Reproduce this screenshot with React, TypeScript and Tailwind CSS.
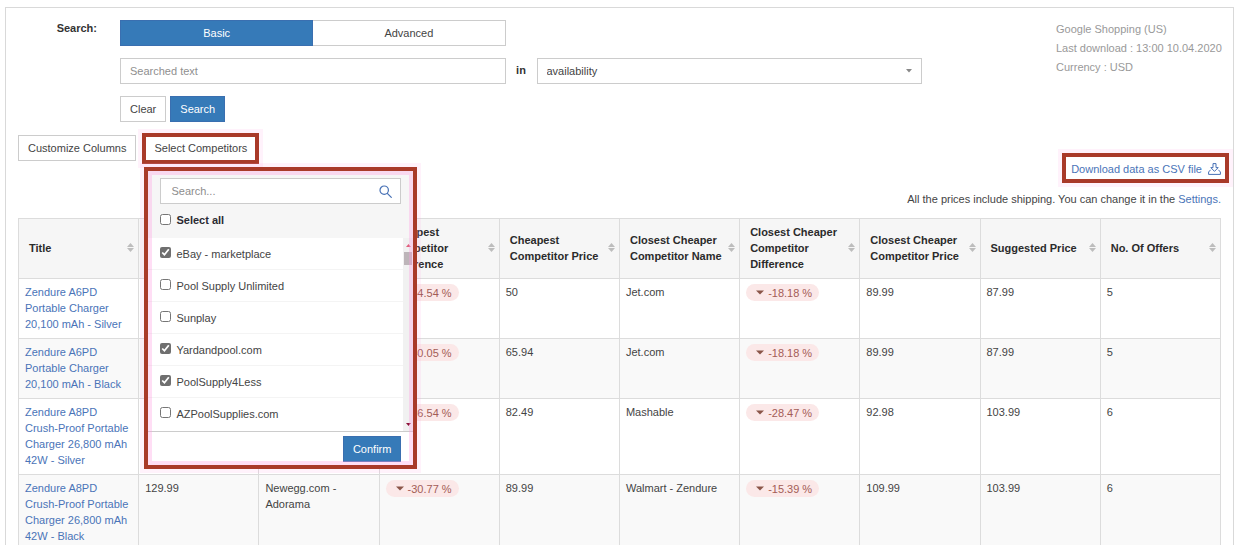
import { useState } from "react";

const LINK = "text-[#4a74b8]";

const columns = [
  "Title",
  "Price",
  "Cheapest Competitor Name",
  "Cheapest Competitor Difference",
  "Cheapest Competitor Price",
  "Closest Cheaper Competitor Name",
  "Closest Cheaper Competitor Difference",
  "Closest Cheaper Competitor Price",
  "Suggested Price",
  "No. Of Offers",
];

const rows = [
  { title: "Zendure A6PD Portable Charger 20,100 mAh - Silver", price: "", name: "", diff: "-54.54 %", low: "50", closest: "Jet.com", closestDiff: "-18.18 %", closestPrice: "89.99", suggested: "87.99", offers: 5 },
  { title: "Zendure A6PD Portable Charger 20,100 mAh - Black", price: "", name: "", diff: "-40.05 %", low: "65.94", closest: "Jet.com", closestDiff: "-18.18 %", closestPrice: "89.99", suggested: "87.99", offers: 5 },
  { title: "Zendure A8PD Crush-Proof Portable Charger 26,800 mAh 42W - Silver", price: "", name: "", diff: "-36.54 %", low: "82.49", closest: "Mashable", closestDiff: "-28.47 %", closestPrice: "92.98", suggested: "103.99", offers: 6 },
  { title: "Zendure A8PD Crush-Proof Portable Charger 26,800 mAh 42W - Black", price: "129.99", name: "Newegg.com - Adorama", diff: "-30.77 %", low: "89.99", closest: "Walmart - Zendure", closestDiff: "-15.39 %", closestPrice: "109.99", suggested: "103.99", offers: 6 },
];

const initialCompetitors = [
  { name: "eBay - marketplace", checked: true },
  { name: "Pool Supply Unlimited", checked: false },
  { name: "Sunplay", checked: false },
  { name: "Yardandpool.com", checked: true },
  { name: "PoolSupply4Less", checked: true },
  { name: "AZPoolSupplies.com", checked: false },
];

function SortIcon() {
  return (
    <svg width="7" height="9" viewBox="0 0 7 9" className="shrink-0 fill-[#bdbdbd]" aria-hidden="true">
      <path d="M3.5 0 7 4H0zM3.5 9 0 5h7z" />
    </svg>
  );
}

function Badge({ value }: { value: string }) {
  return (
    <span className="flex h-[17px] w-fit items-center gap-1 rounded-full bg-[#fbe8e8] pr-[7px] pl-[10px] text-[#a35c56]">
      <svg width="8" height="5" viewBox="0 0 8 5" className="fill-[#8a5548]" aria-hidden="true">
        <path d="M0 .5h8L4 4.5z" />
      </svg>
      {value}
    </span>
  );
}

function CompetitorPanel() {
  const [items, setItems] = useState(initialCompetitors);
  const all = items.every((i) => i.checked);
  return (
    <div className="absolute top-full left-0 z-10 mt-[3px] ml-[2px] w-[273px] border-4 border-[#a93a29] bg-white shadow-[0_0_0_4px_#ff9be022]">
      <div className="bg-[#f6f6f6] px-3 pt-[7px] pb-[10px]">
        <div className="flex h-[26px] items-center border border-[#ccc] bg-white pr-2 pl-[10px]">
          <input
            type="text"
            aria-label="Search competitors"
            placeholder="Search..."
            className="min-w-0 flex-1 outline-none placeholder:text-[#8d8d8d]"
          />
          <svg width="13" height="13" viewBox="0 0 13 13" className="fill-none stroke-[#4670b5] stroke-[1.2]" aria-hidden="true">
            <circle cx="5.2" cy="5.2" r="4.2" />
            <path d="m8.3 8.3 4 4" strokeLinecap="round" />
          </svg>
        </div>
        <label className="mt-2 flex h-4 items-center gap-[5px] font-bold text-[#2b2b33]">
          <input
            type="checkbox"
            checked={all}
            onChange={() => setItems(items.map((i) => ({ ...i, checked: !all })))}
            className="mb-[2px] size-[11px] accent-[#6f6f6f]"
          />
          Select all
        </label>
      </div>
      <div className="flex border-b border-[#ccc]">
        <ul className="flex-1 pb-[2px]">
          {items.map((item) => (
            <li key={item.name} className="border-b border-[#f4f4f4] last:border-0">
              <label className="flex h-[31px] items-center gap-[5px] px-3">
                <input
                  type="checkbox"
                  checked={item.checked}
                  onChange={() =>
                    setItems(items.map((i) => (i.name === item.name ? { ...i, checked: !i.checked } : i)))
                  }
                  className="mb-[2px] size-[11px] accent-[#6f6f6f]"
                />
                {item.name}
              </label>
            </li>
          ))}
        </ul>
        <div className="flex w-[10px] flex-col items-center justify-between bg-[#f1f1f1] pt-[6px] pb-[5px]" aria-hidden="true">
          <div className="flex w-full flex-col items-center gap-[5px]">
            <svg width="5" height="3" viewBox="0 0 5 3" className="fill-[#e0607c]">
              <path d="M0 3h5L2.500 0z" />
            </svg>
            <div className="h-[13px] w-2 bg-[#bdb5b9]" />
          </div>
          <svg width="5" height="3" viewBox="0 0 5 3" className="fill-[#8c1238]">
            <path d="M0 0h5L2.500 3z" />
          </svg>
        </div>
      </div>
      <div className="flex justify-end pt-1 pr-3 pb-[3px]">
        <button type="button" className="h-[26px] border border-[#3a6fb0] bg-[#367ab8] px-[9px] text-white">
          Confirm
        </button>
      </div>
      <div className="pointer-events-none absolute inset-0 shadow-[inset_0_0_0_4px_#ff9be055]" />
    </div>
  );
}

export default function App() {
  return (
    <main className="min-h-screen bg-white pt-[7px] pr-[6px] pl-[5px] font-['Liberation_Sans',Arial,sans-serif] text-[11px] leading-4 text-[#444]">
      <div className="border border-[#d9d9d9] px-3">
        <form className="flex pt-3" onSubmit={(e) => e.preventDefault()}>
          <label htmlFor="query" className="w-[79px] shrink-0 text-right font-bold text-[#333]">
            Search:
          </label>
          <div className="ml-[23px] flex flex-1 flex-col gap-3">
            <div className="grid grid-cols-[1fr_31px_1fr]">
              <div className="flex h-[26px]">
                <button type="button" className="flex-1 border border-[#3a6fb0] bg-[#367ab8] text-white">
                  Basic
                </button>
                <button type="button" className="flex-1 border border-l-0 border-[#ccc] bg-white">
                  Advanced
                </button>
              </div>
            </div>
            <div className="grid grid-cols-[1fr_31px_1fr]">
              <input
                id="query"
                type="text"
                placeholder="Searched text"
                className="h-[26px] min-w-0 border border-[#ccc] px-[9px] outline-none placeholder:text-[#8f8f8f]"
              />
              <label htmlFor="field" className="pt-1 text-center font-bold text-[#333]">
                in
              </label>
              <div className="relative">
                <select id="field" className="h-[26px] w-full appearance-none border border-[#ccc] bg-white px-[9px] outline-none">
                  <option>availability</option>
                </select>
                <svg width="6" height="4" viewBox="0 0 6 4" className="pointer-events-none absolute top-[11px] right-[10px] fill-[#888]" aria-hidden="true">
                  <path d="M0 0h6L3 3.500z" />
                </svg>
              </div>
            </div>
            <div className="flex gap-1">
              <button type="reset" className="h-[26px] border border-[#ccc] bg-white px-[9px]">
                Clear
              </button>
              <button type="submit" className="h-[26px] border border-[#3a6fb0] bg-[#367ab8] px-[9px] text-white">
                Search
              </button>
            </div>
          </div>
          <div className="ml-[134px] w-[165px] shrink-0 leading-[19px] whitespace-nowrap text-[#999]">
            <p>Google Shopping (US)</p>
            <p>Last download : 13:00 10.04.2020</p>
            <p>Currency : USD</p>
          </div>
        </form>

        <div className="mt-[11px] flex justify-between">
          <div className="flex items-start gap-[6px]">
            <button type="button" className="mt-[2px] h-[26px] border border-[#ccc] bg-white px-[9px]">
              Customize Columns
            </button>
            <div className="relative">
              <button type="button" className="h-[31px] border-4 border-[#a93a29] bg-white px-2 pb-[2px] shadow-[0_0_0_4px_#ff9be022]">
                Select Competitors
              </button>
              <CompetitorPanel />
            </div>
          </div>
          <div className="flex flex-col items-end pt-5 pb-[11px]">
            <a
              href="#csv"
              className={`-mr-2 flex h-[30px] items-center gap-[6px] border-4 border-[#a93a29] pt-[2px] pr-1 pl-[5px] shadow-[0_0_0_4px_#ff9be022] ${LINK}`}
            >
              Download data as CSV file
              <svg width="13" height="12" viewBox="0 0 13 12" className="fill-none stroke-[#4670b5]" strokeLinejoin="round" aria-hidden="true">
                <path d="M5 .6h3v4h2.200L6.500 8.400 2.800 4.600H5z" />
                <path d="M2.600 6.800.6 9v2.400h11.800V9l-2-2.200" />
              </svg>
            </a>
            <p className="mt-2">
              All the prices include shipping. You can change it in the{" "}
              <a href="#settings" className={LINK}>
                Settings.
              </a>
            </p>
          </div>
        </div>

        <table className="w-full table-fixed border-collapse">
          <thead>
            <tr className="h-[60px] bg-[#f6f6f6]">
              {columns.map((c) => (
                <th key={c} scope="col" className="border border-[#dcdcdc] pt-1 pr-1 pb-[6px] pl-[10px] text-left text-[#2b2b2b]">
                  <div className="flex items-center justify-between">
                    <span>{c}</span>
                    <SortIcon />
                  </div>
                </th>
              ))}
            </tr>
          </thead>
          <tbody>
            {rows.map((r) => (
              <tr key={r.title} className="align-top even:bg-[#f9f9f9] [&>td]:border [&>td]:border-[#dcdcdc] [&>td]:px-[6px] [&>td]:pt-[5px] [&>td]:pb-[6px]">
                <td>
                  <a href="#product" className={LINK}>
                    {r.title}
                  </a>
                </td>
                <td>{r.price}</td>
                <td>{r.name}</td>
                <td>
                  <Badge value={r.diff} />
                </td>
                <td>{r.low}</td>
                <td>{r.closest}</td>
                <td>
                  <Badge value={r.closestDiff} />
                </td>
                <td>{r.closestPrice}</td>
                <td>{r.suggested}</td>
                <td>{r.offers}</td>
              </tr>
            ))}
          </tbody>
        </table>
      </div>
    </main>
  );
}
